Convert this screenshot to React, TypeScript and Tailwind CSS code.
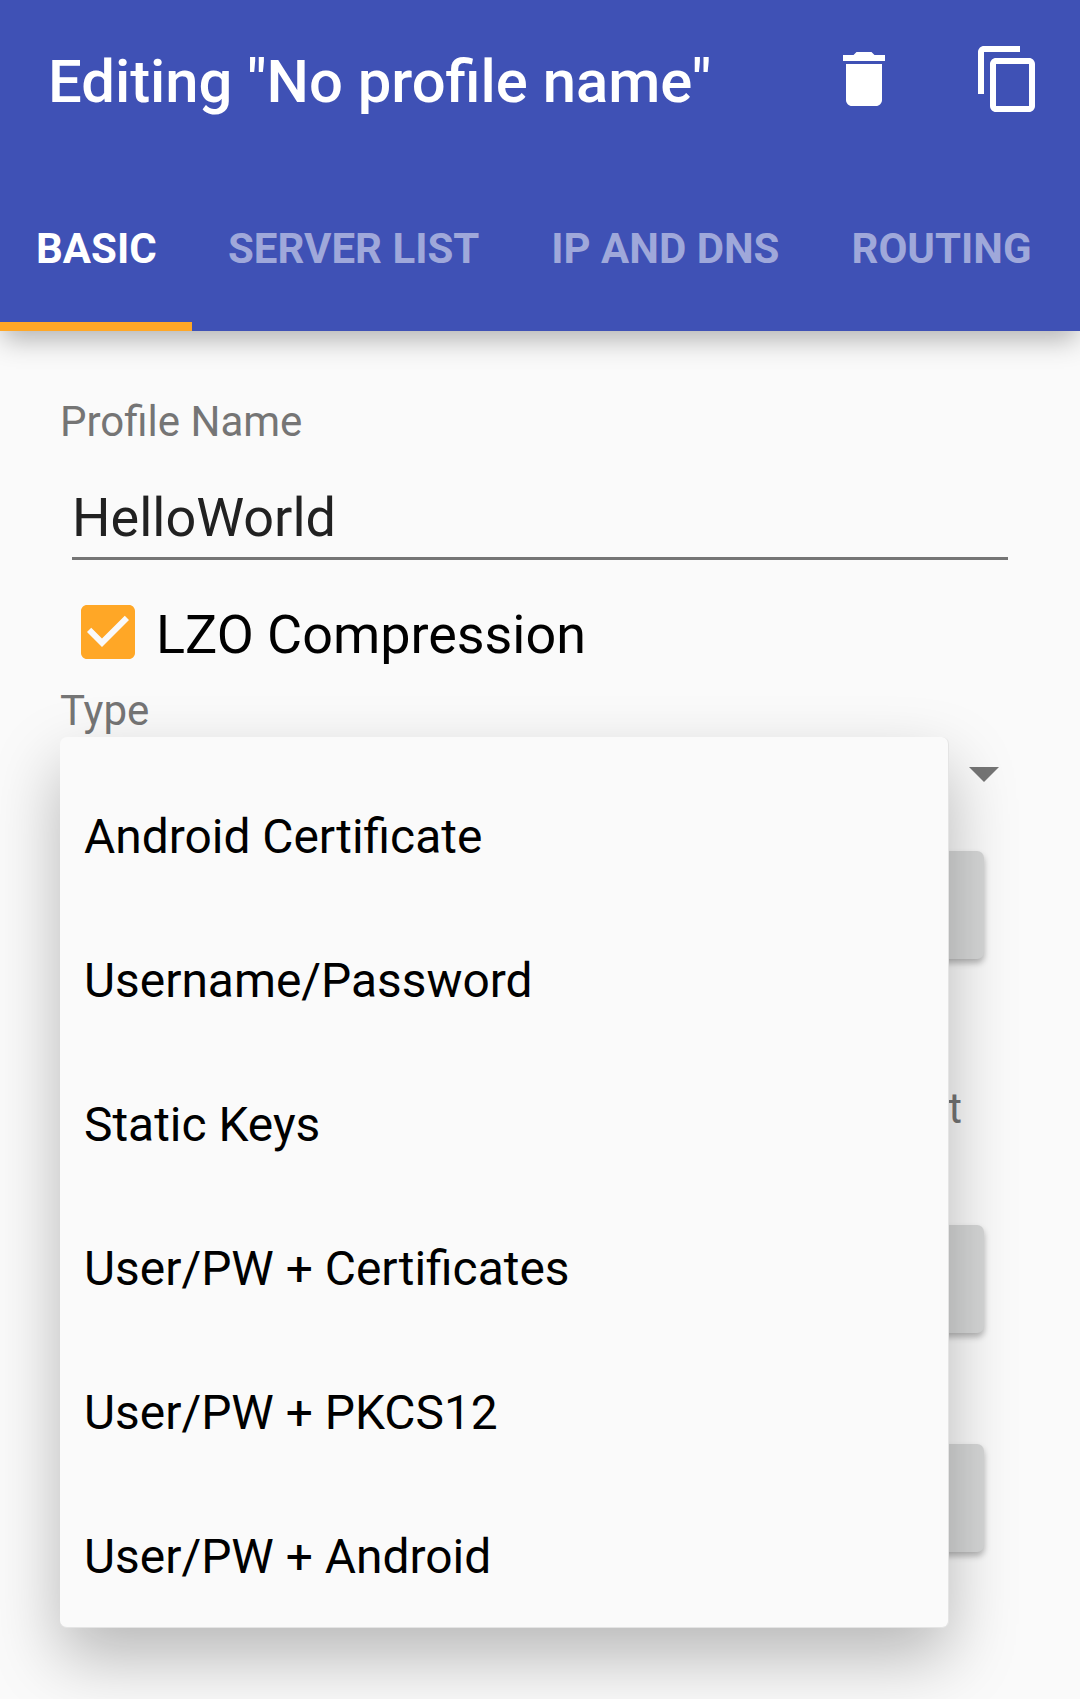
import React from "react";

const TABS = ["BASIC", "SERVER LIST", "IP AND DNS", "ROUTING"];

const TYPES = [
  "Android Certificate",
  "Username/Password",
  "Static Keys",
  "User/PW + Certificates",
  "User/PW + PKCS12",
  "User/PW + Android",
];

function Icon({ d, className }: { d: string; className?: string }) {
  return (
    <svg viewBox="0 0 24 24" className={`size-[72px] shrink-0 fill-current ${className ?? ""}`}>
      <path d={d} />
    </svg>
  );
}

function Header() {
  return (
    <header className="h-[331px] bg-[#3f51b5] text-white shadow-[0_11px_26px_-3px_rgba(0,0,0,0.3)]">
      <div className="flex h-[163px] items-start pl-12 pr-9">
        <h1 className="flex-1 text-[59.8px] font-medium leading-[164px]">Editing "No profile name"</h1>
        <div className="flex gap-[72px] pt-[43px]">
          <Icon d="M6 19c0 1.100.9 2 2 2h8c1.100 0 2-.9 2-2V7H6v12zM19 4h-3.500l-1-1h-5l-1 1H5v2h14V4z" />
          <Icon d="M16 1H4c-1.100 0-2 .9-2 2v14h2V3h12V1zm3 4H8c-1.100 0-2 .9-2 2v14c0 1.100.9 2 2 2h11c1.100 0 2-.9 2-2V7c0-1.100-.9-2-2-2zm0 16H8V7h11v14z" />
        </div>
      </div>
      <nav className="flex h-[168px] text-[42px] font-bold leading-[171px]">
        {TABS.map((tab, i) => (
          <div
            key={tab}
            className={
              i === 0
                ? "h-full w-[192px] overflow-hidden whitespace-nowrap border-b-[9px] border-[#ffa726] px-9"
                : "h-full whitespace-nowrap px-9 text-[#9fa8da]"
            }
          >
            {tab}
          </div>
        ))}
      </nav>
    </header>
  );
}

function FieldButton({ className }: { className: string }) {
  return (
    <div
      className={`h-[108px] w-[912px] rounded-[7px] bg-[#d6d7d7] shadow-[0_4px_6px_rgba(0,0,0,0.28)] ${className}`}
    />
  );
}

function TypeMenu() {
  return (
    <ul className="absolute left-[60px] top-[737px] h-[891px] w-[889px] rounded-[7px] border-b border-r border-[#e4e4e4] bg-[#fafafa] pt-[27px] shadow-[0_29px_67px_rgba(0,0,0,0.27)]">
      {TYPES.map((type) => (
        <li key={type} className="h-36 pl-6 text-[47.9px] leading-[147px] text-black">
          {type}
        </li>
      ))}
    </ul>
  );
}

export default function App() {
  return (
    <div className="relative h-[1699px] w-[1080px] overflow-hidden bg-[#fafafa] font-[Roboto,sans-serif]">
      <Header />
      <main className="flex flex-col px-[60px] pt-[60px]">
        <label className="h-[62px] text-[42px] leading-[62px] text-[#757575]">Profile Name</label>
        <div className="mx-3 mt-[24px] h-[83px] border-b-[3px] border-[#757575] text-[54px] leading-[82px] text-[#212121]">
          HelloWorld
        </div>
        <div className="ml-3 mt-9 flex h-[78px] items-start">
          <Icon
            className="text-[#ffa726]"
            d="M19 3H5c-1.110 0-2 .9-2 2v14c0 1.100.89 2 2 2h14c1.110 0 2-.9 2-2V5c0-1.100-.89-2-2-2zm-9 14l-5-5 1.410-1.410L10 14.170l7.590-7.590L19 8l-9 9z"
          />
          <span className="ml-3 text-[53.9px] leading-[77px] text-black">LZO Compression</span>
        </div>
        <label className="mt-[6px] h-[57px] text-[42px] leading-[62px] text-[#757575]">Type</label>
        <div className="-mr-[60px] flex h-[72px] justify-end pr-[60px]">
          <Icon className="text-[#757575]" d="M7 10l5 5 5-5z" />
        </div>
        <FieldButton className="ml-3 mt-[42px]" />
        <p className="mt-[119px] h-[60px] w-[902px] text-right text-[42px] leading-[62px] text-[#757575]">t</p>
        <FieldButton className="ml-3 mt-[87px]" />
        <FieldButton className="ml-3 mt-[111px]" />
      </main>
      <TypeMenu />
    </div>
  );
}
